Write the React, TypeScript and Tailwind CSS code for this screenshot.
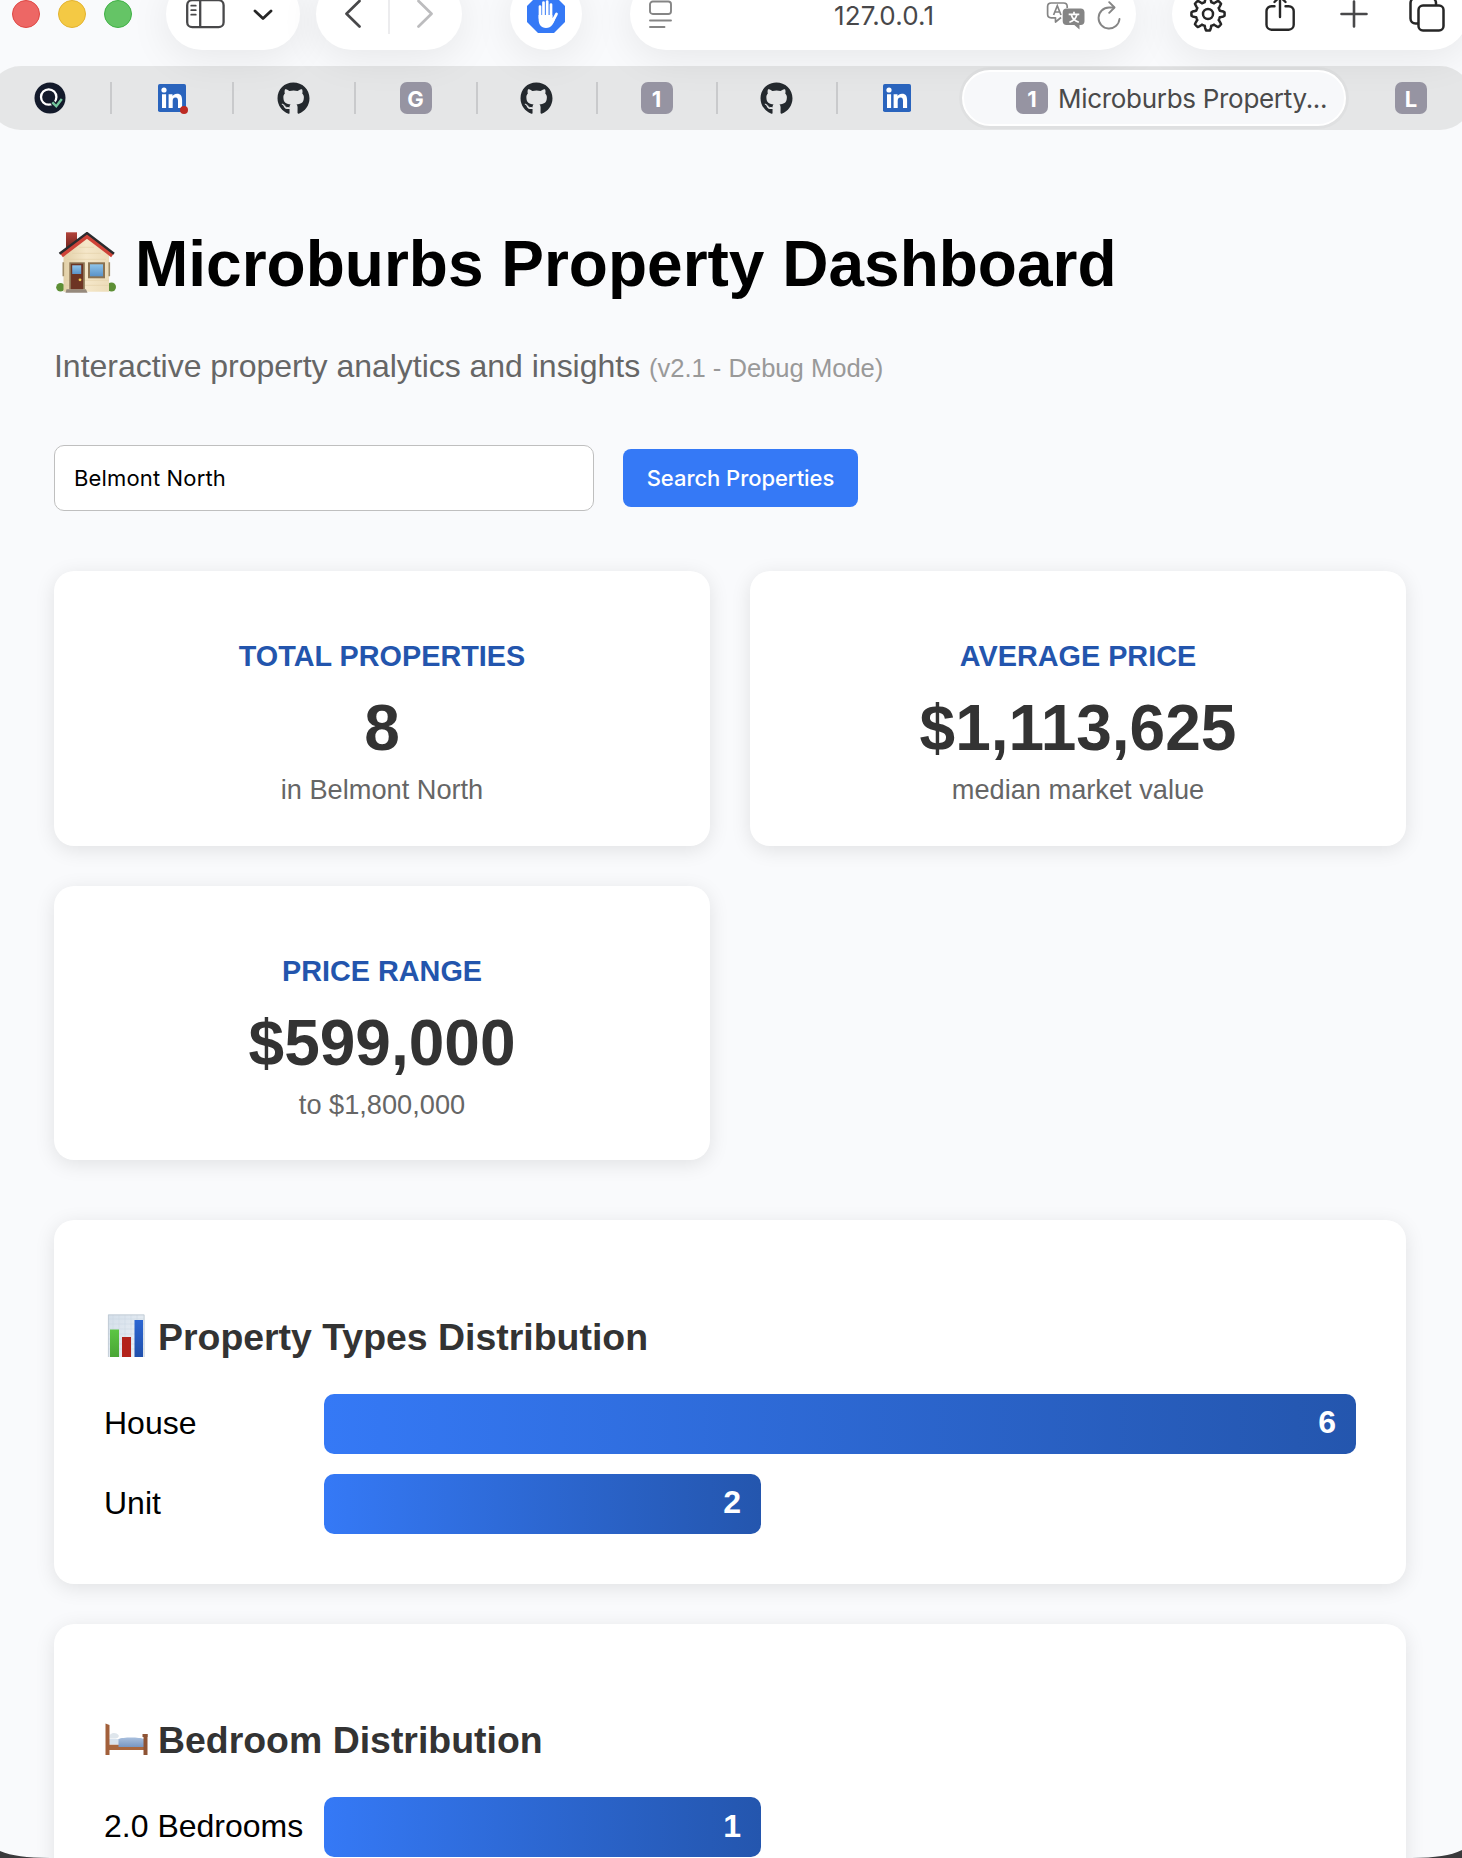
import type { ReactNode } from "react";
import { FaGithub } from "react-icons/fa";

const pillShadow = "shadow-[0_8px_40px_rgba(0,0,0,0.08)]";

function SidebarIcon() {
  return (
    <svg width="40" height="30" viewBox="0 0 40 30" fill="none" stroke="#48484a" className="block">
      <rect x="1.2" y="1.2" width="36.4" height="27" rx="5" strokeWidth="2.3" />
      <path d="M14.2 1v27" strokeWidth="2.3" />
      <path d="M5.200 6.700h4.600M5.200 11.200h4.600M5.200 15.700h4.600" strokeWidth="1.700" strokeLinecap="round" />
    </svg>
  );
}

function HandIcon() {
  return (
    <svg width="40" height="40" viewBox="0 0 40 40" className="block">
      <path d="M12 1h16l11 11v16L28 39H12L1 28V12z" fill="#3579f6" />
      <g stroke="#fff" strokeWidth="2.7" strokeLinecap="round" fill="none">
        <path d="M14 24V12.500M17.500 22V8.500M21.200 22V7.500M25 24V10.500" />
        <path d="M26.500 27.500l4-7.500" />
      </g>
      <path d="M12.600 21h13.800v3l3.400-1.500c-1 4-2.200 6.500-3.600 8.500-1.500 2-3.400 3-6.200 3-5 0-7.400-3.500-7.400-9z" fill="#fff" />
    </svg>
  );
}

function TranslateIcon() {
  return (
    <svg width="40" height="28" viewBox="0 0 40 28" className="block">
      <path
        d="M15 15.500L9.500 20v-4.200H5.200C3 15.800 1.600 14.500 1.600 12.300V4.600C1.600 2.400 3 1 5.200 1h12.400c2.200 0 3.600 1.400 3.600 3.600V6"
        fill="none"
        stroke="#858585"
        strokeWidth="1.700"
        strokeLinejoin="round"
      />
      <path d="M7.600 13L11.300 3.800L15 13M8.800 10h5" fill="none" stroke="#858585" strokeWidth="1.700" />
      <path
        d="M20.500 6.500h14.200c2.400 0 3.800 1.500 3.800 3.800v9c0 2.400-1.400 3.700-3.800 3.700h-1.200V27.500L28.300 23h-7.800c-2.400 0-3.800-1.300-3.800-3.700v-9c0-2.300 1.400-3.800 3.800-3.800z"
        fill="#858585"
      />
      <path
        d="M22.700 12.400h10.600M28 9.800v2.600M31 12.600c-1 3.600-3.700 6.400-7.600 7.700M25.200 12.600c1 3.600 3.500 6.400 7.600 7.700"
        fill="none"
        stroke="#fff"
        strokeWidth="1.700"
      />
    </svg>
  );
}

// Outline of a cog with eight rounded teeth, traced in polar coordinates.
const gearPath =
  Array.from({ length: 160 }, (_, i) => {
    const angle = (i / 160) * Math.PI * 2;
    const wave = Math.max(-1, Math.min(1, 1.7 * Math.cos(8 * angle)));
    const radius = 14.4 + 2.2 * wave;
    return `${i === 0 ? "M" : "L"}${(radius * Math.sin(angle)).toFixed(2)} ${(-radius * Math.cos(angle)).toFixed(2)}`;
  }).join("") + "Z";

function GearIcon() {
  return (
    <svg width="38" height="38" viewBox="-19 -19 38 38" fill="none" stroke="#262626" strokeWidth="2.5" strokeLinejoin="round" className="block">
      <path d={gearPath} />
      <circle r="5" />
    </svg>
  );
}

function HouseIcon() {
  return (
    <svg width="64" height="64" viewBox="0 1.7 64 64" className="block">
      <defs>
        <linearGradient id="wall" x1="0" x2="1">
          <stop offset="0" stopColor="#e2d0a8" />
          <stop offset=".5" stopColor="#f5e7c9" />
          <stop offset="1" stopColor="#ecdcb9" />
        </linearGradient>
        <linearGradient id="glass" x1="0" x2="0" y1="0" y2="1">
          <stop offset="0" stopColor="#8ec4ea" />
          <stop offset="1" stopColor="#5a92c8" />
        </linearGradient>
        <linearGradient id="chimney" x1="0" x2="0" y1="0" y2="1">
          <stop offset="0" stopColor="#b2433a" />
          <stop offset="1" stopColor="#6f211c" />
        </linearGradient>
      </defs>
      <rect x="12" y="2" width="11" height="17" fill="url(#chimney)" />
      <circle cx="6.500" cy="57" r="4.300" fill="#5d8f35" />
      <circle cx="57.500" cy="56.700" r="4.500" fill="#5d8f35" />
      <path d="M9.500 24L33 6l22 18v37.500H9.500z" fill="url(#wall)" />
      <path d="M13 29h39M10 50h45M10 55h45M18 23h29M25 17h15" stroke="#e0cfa6" strokeWidth=".6" />
      <path d="M7.500 25L33 5.500L58.500 25" fill="none" stroke="#cf4338" strokeWidth="4.600" />
      <path d="M5.500 23.500L33 2.800L60 23.500" fill="none" stroke="#2b2b2e" strokeWidth="2.400" />
      <path d="M9.300 32v14M55.300 32v14" stroke="#a08c68" strokeWidth="1.600" />
      <rect x="15.300" y="32" width="15.500" height="27" fill="#8a7252" />
      <rect x="17" y="33.500" width="12" height="25.500" fill="#6d3423" />
      <rect x="18.200" y="35" width="9" height="8.700" fill="url(#glass)" />
      <circle cx="26" cy="49.500" r="1.400" fill="#f2cf58" />
      <rect x="34" y="32" width="17" height="16" fill="#8a7252" />
      <rect x="36" y="34" width="13" height="12" fill="url(#glass)" />
      <path d="M12.500 59h19.500l1.500 3.500H11.500z" fill="#96897c" />
    </svg>
  );
}

function BarChartIcon() {
  return (
    <svg width="46" height="44" viewBox="0 0 46 44" className="-mt-[2px] block">
      <defs>
        <linearGradient id="sheet" x1="0" x2="1" y1="0" y2="1">
          <stop offset="0" stopColor="#d3dee9" />
          <stop offset="1" stopColor="#f1f5f9" />
        </linearGradient>
        <linearGradient id="greenBar" x1="0" x2="0" y1="0" y2="1">
          <stop offset="0" stopColor="#5cc643" />
          <stop offset="1" stopColor="#4aa535" />
        </linearGradient>
        <linearGradient id="blueBar" x1="0" x2="0" y1="0" y2="1">
          <stop offset="0" stopColor="#2c66d2" />
          <stop offset="1" stopColor="#2050ac" />
        </linearGradient>
      </defs>
      <rect x="4" y=".5" width="36.500" height="42.500" fill="url(#sheet)" />
      <path d="M4 5h36M4 10h36M4 15h36M4 20h36M4 25h36M4 30h36M4 35h36M9 1v42M15 1v42M21 1v42M27 1v42M33 1v42" stroke="#c8d4e0" strokeWidth=".5" />
      <path d="M4.400 .9h35.700v42.100M4.400 .9v42.100" fill="none" stroke="#bcc6d0" strokeWidth=".8" />
      <rect x="6" y="15.500" width="9" height="27.500" fill="url(#greenBar)" />
      <rect x="18" y="23" width="9" height="20" fill="#b3231b" />
      <rect x="30.500" y="6" width="8.500" height="37" fill="url(#blueBar)" />
    </svg>
  );
}

function BedIcon() {
  return (
    <svg width="46" height="34" viewBox="0 0 46 34" className="-mt-[2px] block">
      <defs>
        <linearGradient id="blanket" x1="0" x2="0" y1="0" y2="1">
          <stop offset="0" stopColor="#a9c0de" />
          <stop offset="1" stopColor="#7896c2" />
        </linearGradient>
      </defs>
      <path d="M4 22.500h36v5.500H4z" fill="#a9673f" />
      <path d="M5 17h11v5.500H5z" fill="#d8e3ef" />
      <path d="M5.500 13c3-3 7-2.500 9 0 1 2-1 3.500-4 3.500H5.500z" fill="#dfe6ec" />
      <path d="M14.500 17c4-2 21-2 25.500 0v8H14.500z" fill="url(#blanket)" />
      <path d="M1.500 1.500L5.500 3v30h-4z" fill="#a2603b" />
      <rect x="39.500" y="12" width="4" height="21" fill="#8e5334" />
      <path d="M38.500 12h5v3h-5z" fill="#8e5334" />
    </svg>
  );
}

function LinkedInIcon({ badge = false }: { badge?: boolean }) {
  return (
    <svg width="30" height="30" viewBox="0 0 30 30" overflow="visible" className="block">
      <rect x="1" y="1" width="28" height="28" rx="1.800" fill="#2a64bd" />
      <circle cx="7" cy="7" r="2.600" fill="#fff" />
      <path d="M5 11.200h4.100V25H5zM11.600 11.200h3.900v1.900c.8-1.300 2.300-2.300 4.500-2.300 4 0 5.100 2.700 5.100 6.500V25H21v-6.900c0-2-.4-3.700-2.500-3.700-2.200 0-2.800 1.700-2.800 3.700V25h-4.100z" fill="#fff" />
      {badge && <circle cx="27" cy="27" r="4" fill="#bd2a22" />}
    </svg>
  );
}

function CheckLogo() {
  return (
    <svg width="32" height="32" viewBox="0 0 32 32" className="block">
      <circle cx="16" cy="16" r="15.500" fill="#131a2b" />
      <circle cx="14.700" cy="15" r="7.700" fill="none" stroke="#fff" strokeWidth="2.300" />
      <path d="M18 20l4.400 4.200L28 17" fill="none" stroke="#131a2b" strokeWidth="4.500" />
      <path d="M18.300 20.300l4 4L27.800 17" fill="none" stroke="#74c69d" strokeWidth="2.400" />
    </svg>
  );
}

function LetterIcon({ children }: { children: ReactNode }) {
  return (
    <span className="flex h-8 w-8 shrink-0 items-center justify-center rounded-[7px] bg-[#9694a2] pt-px font-[Inter] text-[22px] leading-none font-bold text-white">
      {children}
    </span>
  );
}

function Tab({ children, last = false, narrow = false }: { children: ReactNode; last?: boolean; narrow?: boolean }) {
  return (
    <div className={`flex h-full shrink-0 items-center ${narrow ? "w-[120px]" : "w-[122px]"}`}>
      <div className="flex flex-1 items-center justify-center">{children}</div>
      {!last && <div className="-mr-px h-8 w-[2px] bg-[#c9cacc]" />}
    </div>
  );
}

function BrowserChrome() {
  return (
    <header className="h-[130px]">
      <div className="flex h-[50px] items-end">
        <div className="flex h-[72px] w-[166px] shrink-0 items-center gap-[18px] pl-3">
          <span className="h-7 w-7 rounded-full border border-[#df4744] bg-[#ed6765]" />
          <span className="h-7 w-7 rounded-full border border-[#e3b32f] bg-[#f4c944]" />
          <span className="h-7 w-7 rounded-full border border-[#3fb145] bg-[#65c466]" />
        </div>
        <div className={`flex h-[72px] w-[134px] shrink-0 items-center rounded-full bg-white pl-5 ${pillShadow}`}>
          <SidebarIcon />
          <svg width="20" height="12" viewBox="0 0 20 12" fill="none" className="ml-[27px] mt-[2px] block">
            <path d="M2 2l8 7.500L18 2" stroke="#262626" strokeWidth="2.800" strokeLinecap="round" strokeLinejoin="round" />
          </svg>
        </div>
        <div className={`ml-4 flex h-[72px] w-[146px] shrink-0 items-center rounded-full bg-white pl-7 ${pillShadow}`}>
          <svg width="18" height="30" viewBox="0 0 18 30" fill="none" className="block">
            <path d="M15.500 2L2.500 14.800l13 12.700" stroke="#48484a" strokeWidth="2.700" strokeLinecap="round" strokeLinejoin="round" />
          </svg>
          <span className="ml-[26px] h-10 w-[2px] bg-[#ececee]" />
          <svg width="18" height="30" viewBox="0 0 18 30" fill="none" className="ml-[26px] block">
            <path d="M2.500 2l13 12.800-13 12.700" stroke="#bcbcbe" strokeWidth="2.700" strokeLinecap="round" strokeLinejoin="round" />
          </svg>
        </div>
        <div className={`ml-12 flex h-[72px] w-[72px] shrink-0 items-center justify-center rounded-full bg-white ${pillShadow}`}>
          <HandIcon />
        </div>
        <div className={`ml-12 flex h-[72px] w-[506px] shrink-0 items-center rounded-full bg-white pl-[18px] ${pillShadow}`}>
          <svg width="24" height="30" viewBox="0 0 24 30" fill="none" stroke="#858585" strokeLinecap="round" className="block">
            <rect x="2" y="2.500" width="21" height="12.500" rx="2.800" strokeWidth="1.900" />
            <path d="M2 21.500h21M2 28h14.500" strokeWidth="1.900" />
          </svg>
          <span className="mt-[3px] ml-[162px] w-[106px] font-[Inter] text-[26px] leading-[26px] tracking-[0.15px] whitespace-nowrap text-[#48484a]">
            127.0.0.1
          </span>
          <span className="ml-[106px] pt-[3px]">
            <TranslateIcon />
          </span>
          <svg width="26" height="30" viewBox="0 0 26 30" fill="none" stroke="#858585" strokeWidth="1.900" strokeLinecap="round" strokeLinejoin="round" className="ml-[10px] mt-1 block">
            <path d="M23.500 18a10.500 10.500 0 1 1-10.500-11.500h5" />
            <path d="M13.200 1.200l5.300 5.300-5.300 5.300" />
          </svg>
        </div>
        <div className={`ml-9 flex h-[72px] w-[296px] shrink-0 items-center rounded-full bg-white pl-[17px] ${pillShadow}`}>
          <GearIcon />
          <svg width="32" height="40" viewBox="0 0 32 40" fill="none" stroke="#262626" strokeWidth="2.400" strokeLinecap="round" strokeLinejoin="round" className="ml-[37px] block">
            <path d="M10.500 13.500H7.500a5 5 0 0 0-5 5V32a5 5 0 0 0 5 5h17.200a5 5 0 0 0 5-5V18.500a5 5 0 0 0-5-5h-3.200" transform="translate(0 -1.300)" />
            <path d="M16 23V3M10.500 8L16 2.500L21.500 8" />
          </svg>
          <svg width="28" height="28" viewBox="0 0 28 28" stroke="#48484a" strokeWidth="2.600" strokeLinecap="round" className="ml-[44px] block">
            <path d="M14 1.500v25M1.500 14h25" />
          </svg>
          <svg width="38" height="40" viewBox="0 0 38 40" fill="none" stroke="#262626" strokeWidth="2.500" strokeLinejoin="round" className="ml-[40px] block">
            <rect x="10.500" y="11.500" width="25" height="25" rx="4.500" />
            <path d="M10 29.500H7.500a5 5 0 0 1-5-5V9a5 5 0 0 1 5-5H23a5 5 0 0 1 5 5v2" />
          </svg>
        </div>
      </div>
      <nav className="-mr-[10px] -ml-[11px] mt-4 flex h-16 items-center rounded-full bg-[#e0e1e1]/80">
        <Tab><CheckLogo /></Tab>
        <Tab><LinkedInIcon badge /></Tab>
        <Tab><FaGithub size={33} color="#24292e" /></Tab>
        <Tab><LetterIcon>G</LetterIcon></Tab>
        <Tab narrow><FaGithub size={33} color="#24292e" /></Tab>
        <Tab narrow><LetterIcon>1</LetterIcon></Tab>
        <Tab narrow><FaGithub size={33} color="#24292e" /></Tab>
        <Tab narrow last><LinkedInIcon /></Tab>
        <div className="ml-[5px] flex h-14 w-[384px] shrink-0 items-center gap-[10px] rounded-full border-2 border-white bg-[#f7f8fa] pl-[52px] shadow-[0_0_0_3px_rgba(0,0,0,0.025)]">
          <LetterIcon>1</LetterIcon>
          <span className="pt-[2px] font-[Inter] text-[26px] leading-8 tracking-[-0.3px] whitespace-nowrap text-[#4a4a4a]">
            Microburbs Property...
          </span>
        </div>
        <div className="ml-[49px] flex h-full items-center">
          <LetterIcon>L</LetterIcon>
        </div>
      </nav>
    </header>
  );
}

const cardStyle = "rounded-[20px] bg-white shadow-[0_4px_20px_rgba(0,0,0,0.1)]";

function StatCard({ label, value, note }: { label: string; value: string; note: string }) {
  return (
    <div className={`h-[274.5px] pt-[69px] text-center ${cardStyle}`}>
      <h3 className="text-[28.8px] leading-8 font-bold text-[#2355ad]">{label}</h3>
      <div className="mt-5 text-[64px] leading-[72px] font-bold text-[#333]">{value}</div>
      <div className="mt-[10px] text-[27.2px] leading-8 text-[#666]">{note}</div>
    </div>
  );
}

type Row = { label: string; count: number; width: string };

function ChartCard({ icon, title, rows }: { icon: ReactNode; title: string; rows: Row[] }) {
  return (
    <section className={`mb-10 px-[50px] pt-[94.5px] pb-[50px] ${cardStyle}`}>
      <h3 className="flex h-11 items-center gap-2 text-[37.44px] leading-[44px] font-bold whitespace-nowrap text-[#333]">
        {icon}
        {title}
      </h3>
      <div className="mt-[35px] flex flex-col gap-5">
        {rows.map((row) => (
          <div key={row.label} className="flex h-[60px] items-center gap-5">
            <div className="w-[200px] shrink-0 text-[32px] leading-[58px] whitespace-nowrap text-black h-[60px]">{row.label}</div>
            <div
              className="flex h-full items-center justify-end rounded-[10px] bg-linear-to-r from-[#3579f6] to-[#2456ae] pr-5 pb-[3px] text-[32px] font-bold text-white"
              style={{ width: row.width }}
            >
              {row.count}
            </div>
          </div>
        ))}
      </div>
    </section>
  );
}

export default function App() {
  return (
    <div className="relative h-[1858px] w-[1462px] overflow-hidden bg-[#f9fafc] font-['Liberation_Sans',Arial,sans-serif]">
      <BrowserChrome />
      <main className="pr-[56px] pl-[54px]">
        <h1 className="flex items-center gap-[17px] pt-[98px] text-[64px] leading-[72px] font-bold whitespace-nowrap text-black">
          <HouseIcon />
          Microburbs Property Dashboard
        </h1>
        <p className="mt-[48px] text-[32px] leading-9 tracking-[-0.02px] whitespace-nowrap text-[#666]">
          Interactive property analytics and insights <span className="text-[25.6px] text-[#999]">(v2.1 - Debug Mode)</span>
        </p>
        <div className="mt-[59px] flex h-[66px] items-center gap-[29px]">
          <input
            defaultValue="Belmont North"
            className="h-[66px] w-[540px] rounded-[10px] border border-[#bfbfbf] bg-white px-[19px] font-[Inter] text-[22px] tracking-[0.15px] text-black outline-none"
          />
          <button className="h-[58px] w-[235px] rounded-lg bg-[#3579f6] font-[Inter] text-[22px] font-medium tracking-[-0.05px] whitespace-nowrap text-white">
            Search Properties
          </button>
        </div>
        <div className="mt-[60px] grid grid-cols-2 gap-10">
          <StatCard label="TOTAL PROPERTIES" value="8" note="in Belmont North" />
          <StatCard label="AVERAGE PRICE" value="$1,113,625" note="median market value" />
          <StatCard label="PRICE RANGE" value="$599,000" note="to $1,800,000" />
        </div>
        <div className="mt-[60px]">
          <ChartCard
            icon={<BarChartIcon />}
            title="Property Types Distribution"
            rows={[
              { label: "House", count: 6, width: "1032px" },
              { label: "Unit", count: 2, width: "437px" },
            ]}
          />
          <ChartCard
            icon={<BedIcon />}
            title="Bedroom Distribution"
            rows={[{ label: "2.0 Bedrooms", count: 1, width: "437px" }]}
          />
        </div>
      </main>
      <svg width="52" height="8" viewBox="0 0 52 8" className="absolute bottom-0 left-0">
        <path d="M0 1C12 6 26 7.500 50 8H0z" fill="#3a3a3c" />
      </svg>
      <svg width="52" height="8" viewBox="0 0 52 8" className="absolute right-0 bottom-0">
        <path d="M52 0C40 6 26 7.500 2 8H52z" fill="#3a3a3c" />
      </svg>
    </div>
  );
}
